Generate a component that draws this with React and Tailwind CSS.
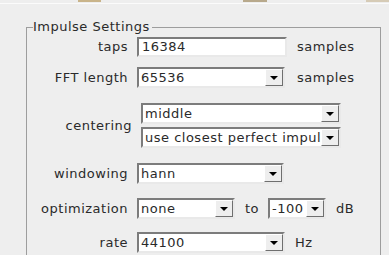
function Arrow() {
  return (
    <svg width="8" height="4" viewBox="0 0 8 4">
      <polygon points="0,0 8,0 4,4" fill="#000" />
    </svg>
  );
}

function Combo({ value, width }) {
  return (
    <div
      className="flex h-[21px] shrink-0 border-2 border-t-[#7c7c7c] border-l-[#7c7c7c] border-b-[#e9e9e9] border-r-[#e9e9e9] bg-white"
      style={{ width }}
    >
      <span className="min-w-0 flex-1 overflow-hidden whitespace-nowrap pl-[2px] leading-[17px]">{value}</span>
      <span className="flex w-[18px] shrink-0 items-center justify-center border border-t-white border-l-white border-b-[#6f6f6f] border-r-[#6f6f6f] bg-[#eeeeee]">
        <Arrow />
      </span>
    </div>
  );
}

function Field({ value, width }) {
  return (
    <div
      className="flex h-[20px] shrink-0 items-center border-2 border-t-[#7c7c7c] border-l-[#7c7c7c] border-b-[#e9e9e9] border-r-[#e9e9e9] bg-white pl-[3px]"
      style={{ width }}
    >
      {value}
    </div>
  );
}

function Row({ label, labelWidth = 101, className = "", children }) {
  return (
    <div className={`flex items-center ${className}`}>
      <span className="shrink-0 text-right" style={{ width: labelWidth, marginRight: 9 }}>
        {label}
      </span>
      {children}
    </div>
  );
}

export default function App() {
  return (
    <div
      className="h-[255px] w-[389px] overflow-hidden bg-[#eeeeee] text-[13px] tracking-[0.5px] text-[#2a2a2a]"
      style={{ fontFamily: '"DejaVu Sans", sans-serif' }}
    >
      <div className="flex h-[3px]">
        <div className="ml-[78px] h-[2px] w-[24px] bg-[#c9b48a]" />
        <div className="ml-[142px] h-[2px] w-[24px] bg-[#b8a98c]" />
        <div className="ml-[99px] h-[2px] w-[24px] bg-[#d6cbb6]" />
      </div>
      <div className="h-px bg-[#fbfbfb]" />

      <fieldset className="mt-[15px] ml-[26px] w-[355px] border border-[#9d9d9d] pt-[2px] pb-3">
        <legend className="ml-[6px] pr-[2px] leading-4">Impulse Settings</legend>

        <Row label="taps">
          <Field value="16384" width={150} />
          <span className="ml-[10px]">samples</span>
        </Row>

        <Row label="FFT length" className="mt-[10px]">
          <Combo value="65536" width={148} />
          <span className="ml-[12px]">samples</span>
        </Row>

        <Row label="centering" labelWidth={105} className="mt-[15px]">
          <div className="flex flex-col gap-[3px]">
            <Combo value="middle" width={200} />
            <Combo value="use closest perfect impulse" width={200} />
          </div>
        </Row>

        <Row label="windowing" className="mt-[15px]">
          <Combo value="hann" width={147} />
        </Row>

        <Row label="optimization" className="mt-[14px]">
          <Combo value="none" width={98} />
          <span className="ml-[10px]">to</span>
          <span className="ml-[9px]">
            <Combo value="-100" width={58} />
          </span>
          <span className="ml-[10px]">dB</span>
        </Row>

        <Row label="rate" className="mt-[13px]">
          <Combo value="44100" width={148} />
          <span className="ml-[10px]">Hz</span>
        </Row>
      </fieldset>
    </div>
  );
}
